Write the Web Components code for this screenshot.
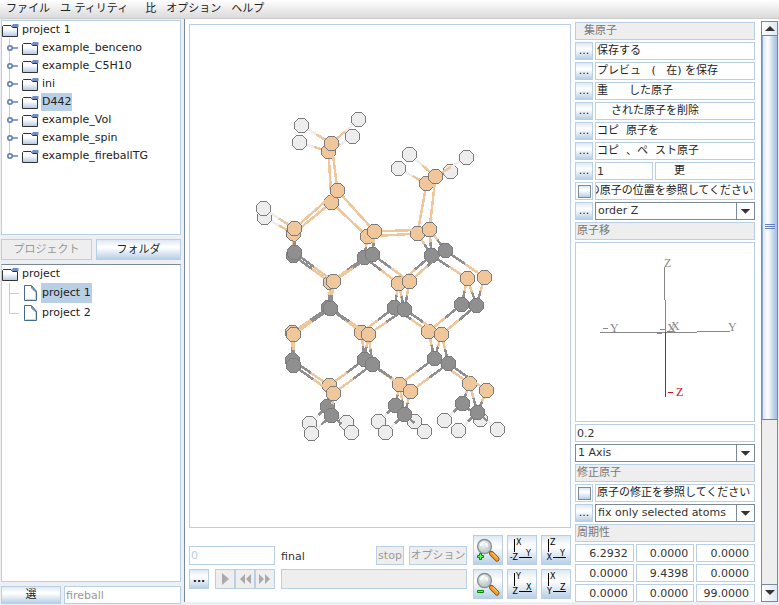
<!DOCTYPE html>
<html lang="ja">
<head>
<meta charset="utf-8">
<title>project 1</title>
<style>
  html, body { height: 100%; margin: 0; }
  body {
    background: #eeeff2; color: #333;
    font: 11px/16px "DejaVu Sans", "Noto Sans CJK JP", sans-serif;
    --line: #b8cfe5; --dark: #7a8a99; --dim: #999; --panel: #eee;
    --metal: linear-gradient(#dde8f3, #fff 35%, #fff 40%, #b8cfe5);
  }
</style>
</head>
<body>
<molecule-app></molecule-app>
<script>
const define = (name, html, setup) => {
  const t = document.createElement('template');
  t.innerHTML = '<style>*{box-sizing:border-box}button,input,select{font:inherit;color:inherit;margin:0;border-radius:0}</style>' + html;
  customElements.define(name, class extends HTMLElement {
    connectedCallback() {
      if (this.shadowRoot) return;
      this.attachShadow({ mode: 'open' }).append(t.content.cloneNode(true));
      if (setup) setup(this, this.shadowRoot);
    }
  });
};

define('metal-button', `
<style>
  :host { display: block; min-width: 0; }
  button { display: flex; align-items: center; justify-content: center; width: 100%; height: 100%; padding: 0;
    border: 1px solid var(--line); background: var(--metal); color: #222; white-space: nowrap; overflow: hidden; }
  button:disabled { background: var(--panel); color: var(--dim); }
  :host([strong]) button { font-weight: bold; }
</style>
<button type="button"><slot></slot></button>`, (el, root) => {
  const b = root.querySelector('button');
  b.disabled = el.hasAttribute('off');
  if (el.hasAttribute('name')) b.setAttribute('aria-label', el.getAttribute('name'));
});

define('text-box', `
<style>
  :host { display: block; min-width: 0; }
  input { display: block; width: 100%; height: 100%; padding: 0 1px; border: 1px solid var(--line); background: #fff; outline: 0; }
  input:disabled { color: var(--line); }
  :host([number]) input { text-align: right; padding-right: 5px; }
  :host([dim]) input { color: var(--dim); }
</style>
<input type="text">`, (el, root) => {
  const i = root.querySelector('input');
  i.value = el.getAttribute('value') || '';
  i.disabled = el.hasAttribute('off');
  i.setAttribute('aria-label', el.getAttribute('name'));
});

define('combo-box', `
<style>
  :host { display: grid; grid-template-columns: 1fr 18px; min-width: 0; border: 1px solid var(--dark); background: #fff; }
  select { grid-area: 1 / 1 / 2 / 3; appearance: none; width: 100%; height: 16px; padding: 0 18px 0 2px; border: 0; background: none; outline: 0; }
  svg { grid-area: 1 / 2; width: 18px; height: 16px; border-left: 1px solid var(--dark); pointer-events: none; }
</style>
<select></select>
<svg viewBox="0 0 18 16" aria-hidden="true"><path d="M4 6h10l-5 5z" fill="#333"/></svg>`, (el, root) => {
  const s = root.querySelector('select');
  s.add(new Option(el.getAttribute('value')));
  s.setAttribute('aria-label', el.getAttribute('name'));
});

define('action-row', `
<style>
  :host { display: grid; grid-template-columns: 18px 1fr; gap: 2px; height: 18px; }
  .text { border: 1px solid var(--line); background: #fff; white-space: pre; overflow: hidden; padding: 0 1px; color: #222; }
</style>
<metal-button>...</metal-button><div class="text"><slot></slot></div>`, (el, root) => {
  root.querySelector('metal-button').setAttribute('name', el.textContent.trim());
});

define('check-row', `
<style>
  :host { display: block; height: 18px; }
  label { display: grid; grid-template-columns: 18px 1fr; gap: 2px; height: 100%; }
  .box { display: flex; align-items: center; justify-content: center; border: 1px solid var(--line); background: #fff; }
  input { appearance: none; width: 13px; height: 13px; border: 1px solid var(--dark); background: var(--metal); }
  .text { display: flex; border: 1px solid var(--line); background: #fff; white-space: pre; overflow: hidden; padding: 0 1px; color: #222; }
  :host([end]) .text { justify-content: flex-end; }
</style>
<label><span class="box"><input type="checkbox"></span><span class="text"><slot></slot></span></label>`);

define('section-title', `
<style>
  :host { display: block; height: 18px; padding: 0 1px; border: 1px solid var(--line); background: var(--panel); color: #777; }
  div { white-space: pre; }
</style>
<div><slot></slot></div>`);

define('menu-bar', `
<style>
  nav { display: flex; gap: 10px; height: 19px; padding: 0 6px; border-bottom: 1px solid #ccc; background: linear-gradient(#fff, #dadada); }
  button { padding: 0; border: 0; background: none; color: #222; white-space: pre; line-height: 18px; }
</style>
<nav><button>ファイル</button><button>ユ ティリティ</button><button>  比</button><button>オプション</button><button>ヘルプ</button></nav>`);

define('tree-node', `
<style>
  :host { display: flex; align-items: center; height: var(--row, 18px); }
  :host([kind=root]) { height: 18px; }
  .handle { flex: none; width: 20px; height: 100%; }
  .icon { flex: none; width: 17px; height: 16px; }
  .label { height: 100%; display: flex; align-items: center; margin-left: 2px; padding: 0 1px; color: #222; }
  :host([selected]) .label { background: var(--line); }
</style>
<svg class="handle" viewBox="0 0 20 18" preserveAspectRatio="none" aria-hidden="true"></svg>
<svg class="icon" viewBox="0 0 17 16" aria-hidden="true"></svg>
<span class="label"><slot></slot></span>`, (el, root) => {
  const h = root.querySelector('.handle'), i = root.querySelector('.icon'), k = el.getAttribute('kind');
  el.setAttribute('role', 'treeitem');
  if (k === 'root') h.remove();
  if (k === 'branch') h.innerHTML = '<path d="M7.500 0V' + (el.hasAttribute('last') ? 9 : 18) + '" stroke="#b8cfe5"/><path d="M10 9H16" stroke="#6382bf" stroke-width="1.500"/><circle cx="8" cy="9" r="2.200" fill="#fff" stroke="#6382bf" stroke-width="1.700"/>';
  if (k === 'leaf') h.innerHTML = '<path d="M7.500 0V' + (el.hasAttribute('last') ? 9.5 : 18) + 'M7.500 9.500H17" stroke="#b8cfe5" fill="none"/>';
  i.innerHTML = k === 'leaf'
    ? '<path d="M2.500 .5H9.500L14.500 6.500V15.500H2.500Z" fill="#fff" stroke="#46698f"/><path d="M4 14.500H13.500V7" fill="none" stroke="#c8d8ea"/><path d="M9.500 1V3L13 6.500H14.500Z" fill="#8aa9d0" stroke="#46698f" stroke-width=".7"/>'
    : '<defs><linearGradient id="g" x2="0" y2="1"><stop offset=".35" stop-color="#fff"/><stop offset="1" stop-color="#b0c6e4"/></linearGradient></defs><path d="M.5 14.500V4.500L1.500 3.500H9L10.500 5.500H15.500V14.500Z" fill="url(#g)" stroke="#333"/><path d="M9.500 4L11 2H16.500V5H10.500Z" fill="#6f8cc4"/>';
});

define('tree-panel', `
<style>
  :host { display: block; min-height: 0; overflow: hidden; border: 1px solid var(--line); background: #fff; }
  :host([tall]) { --row: 20px; border-top-color: var(--dark); }
</style><div role="tree"><slot></slot></div>`);

define('project-side', `
<style>
  :host { display: grid; grid-template-rows: 215fr 21px 318fr 16px; gap: 4px; min-height: 0; padding: 1px 3px 0 1px; border-right: 1px solid var(--dark); }
  .tabs { display: grid; grid-template-columns: 91fr 85fr; gap: 4px; }
  .filter { display: grid; grid-template-columns: 60px 1fr; gap: 3px; }
</style>
<tree-panel aria-label="フォルダ">
  <tree-node kind="root">project 1</tree-node>
  <tree-node kind="branch">example_benceno</tree-node>
  <tree-node kind="branch">example_C5H10</tree-node>
  <tree-node kind="branch">ini</tree-node>
  <tree-node kind="branch" selected>D442</tree-node>
  <tree-node kind="branch">example_Vol</tree-node>
  <tree-node kind="branch">example_spin</tree-node>
  <tree-node kind="branch" last>example_fireballTG</tree-node>
</tree-panel>
<div class="tabs"><metal-button off>プロジェクト</metal-button><metal-button>フォルダ</metal-button></div>
<tree-panel tall aria-label="プロジェクト">
  <tree-node kind="root">project</tree-node>
  <tree-node kind="leaf" selected>project 1</tree-node>
  <tree-node kind="leaf" last>project 2</tree-node>
</tree-panel>
<div class="filter"><metal-button>選</metal-button><text-box dim value="fireball" name="filter"></text-box></div>`);

/* Atoms: [kind, x, y], in two depth layers. Bonds join the same indexes in each layer; CROSS joins one layer to the other. */
const FAR = [
  ['h',299,142],['h',352,136],['c',328,151],['c',331,202],['h',264,217],['c',293,233],['c',367,236],['c',417,233],
  ['c',426,183],['h',398,168],['h',450,171],['s',293,255],['s',364,257],['s',431,255],['c',330,282],['c',398,283],
  ['c',467,278],['s',328,307],['s',394,307],['s',461,304],['c',292,332],['c',361,332],['c',428,331],['s',292,360],
  ['s',364,359],['s',434,358],['c',329,385],['c',399,384],['c',469,383],['s',327,406],['s',395,405],['s',462,403],
  ['h',309,423],['h',346,422],['h',378,421],['h',414,421],['h',444,420],['h',480,419]];
const NEAR = [
  ['h',301,125],['h',358,119],['c',331,143],['c',337,190],['h',263,208],['c',294,228],['c',374,231],['c',429,229],
  ['c',435,176],['h',409,154],['h',466,157],['s',294,252],['s',372,254],['s',445,250],['c',333,281],['c',409,281],
  ['c',484,277],['s',330,308],['s',404,309],['s',476,305],['c',293,334],['c',368,334],['c',441,334],['s',293,365],
  ['s',372,364],['s',448,363],['c',333,393],['c',410,391],['c',486,390],['s',331,415],['s',404,414],['s',477,412],
  ['h',311,433],['h',351,432],['h',385,432],['h',424,431],['h',458,430],['h',497,429]];
const BONDS = [[2,0],[2,1],[2,3],[3,5],[5,4],[3,6],[6,7],[7,8],[8,9],[8,10],[5,11],[6,12],[7,13],[11,14],[12,14],
  [12,15],[13,15],[13,16],[14,17],[15,18],[16,19],[17,20],[17,21],[18,21],[18,22],[19,22],[20,23],[21,24],[22,25],
  [23,26],[24,26],[24,27],[25,27],[25,28],[26,29],[27,30],[28,31],[29,32],[29,33],[30,34],[30,35],[31,36],[31,37]];
const CROSS = [[7,13],[15,18],[16,19],[21,24],[22,25],[27,30],[28,31]];

define('molecule-view', `
<style>
  :host { display: block; min-height: 0; border: 1px solid var(--line); background: #fff; }
  svg { display: block; width: 100%; height: 100%; }
</style>
<svg viewBox="190 25 380 502" shape-rendering="crispEdges" role="img" aria-label="D442"></svg>`, (el, root) => {
  const fill = { h: '#ededed', c: '#f0c69b', s: '#8f8f8f' };
  const bond = (a, b) => {
    const mx = (a[1] + b[1] + 1) / 2, my = (a[2] + b[2] + 1) / 2;
    const part = p => `<line x1="${p[1] + .5}" y1="${p[2] + .5}" x2="${mx}" y2="${my}" stroke="${fill[p[0]]}" stroke-width="2.500"/>`;
    return part(a) + part(b);
  };
  const atom = a => `<circle cx="${a[1] + .5}" cy="${a[2] + .5}" r="7.400" fill="${fill[a[0]]}" stroke="#7b7b7b"/>`;
  const cross = CROSS.map(([a, b]) => a === 7 || a === 21 || a === 22 ? bond(NEAR[a], FAR[b]) : bond(FAR[a], NEAR[b])).join('');
  root.querySelector('svg').innerHTML =
    BONDS.map(([a, b]) => bond(FAR[a], FAR[b])).join('') + cross + FAR.map(atom).join('') +
    BONDS.map(([a, b]) => bond(NEAR[a], NEAR[b])).join('') + NEAR.map(atom).join('');
});

define('zoom-icon', `
<style>:host, svg { display: block; width: 28px; height: 28px; }</style>
<svg viewBox="1 1 28 28" aria-hidden="true">
  <defs><radialGradient id="l" cx=".4" cy=".35"><stop stop-color="#f4f7f7"/><stop offset="1" stop-color="#c0cccd"/></radialGradient></defs>
  <path d="M16 16L19 19" stroke="#777" stroke-width="3"/>
  <path d="M18.500 18.500L24 24" stroke="#7a4b12" stroke-width="5" stroke-linecap="round"/>
  <path d="M18.500 18.500L24 24" stroke="#f0a030" stroke-width="3.400" stroke-linecap="round"/>
  <path d="M19.500 18L24 22.500" stroke="#ffe0a0"/>
  <circle cx="11.500" cy="11.500" r="7" fill="url(#l)" stroke="#8b9293" stroke-width="1.400"/>
  <path d="M7.500 11C8 8 10 7 12 7M12 9h2v3" fill="none" stroke="#fff" stroke-width="1.300"/>
  <path class="sign" fill="#5f5" stroke="#080"/>
</svg>`, (el, root) => root.querySelector('.sign').setAttribute('d',
  el.hasAttribute('out') ? 'M4.500 21.500h6v2h-6z' : 'M6.500 18.500h2v2h2v2h-2v2h-2v-2h-2v-2h2z'));

define('axis-icon', `
<style>:host, svg { display: block; width: 28px; height: 28px; } text { font: 8px "DejaVu Sans", sans-serif; fill: #000; }</style>
<svg viewBox="1 1 28 28"><path d="M7.500 4V17M12 22.500H25" stroke="#000" shape-rendering="crispEdges"/>
<text x="9" y="10"></text><text x="11" y="25" text-anchor="end"></text><text x="19" y="21"></text></svg>`,
(el, root) => root.querySelectorAll('text').forEach((t, i) => t.textContent = el.getAttribute('axes').split(',')[i]));

define('player-panel', `
<style>
  :host { display: grid; grid-template-columns: 86px 1fr 98px; gap: 4px 6px; grid-template-rows: 30px 30px; }
  .a, .b { display: flex; align-items: flex-end; }
  .a text-box { flex: 1; height: 19px; }
  .b span { flex: 1; }
  .stop { width: 28px; height: 19px; margin-right: 5px; }
  .opt { width: 58px; height: 19px; }
  .c { display: flex; gap: 6px; height: 20px; }
  .more { width: 20px; }
  .keys { flex: 1; display: flex; }
  .keys metal-button { flex: 1; }
  .d { height: 20px; border: 1px solid var(--line); background: var(--panel); }
  .icons { grid-area: 1 / 3 / 3 / 4; display: grid; grid-template-columns: repeat(3, 30px); grid-template-rows: 30px 30px; gap: 4px; }
  svg { width: 16px; height: 12px; fill: #aaa; }
</style>
<div class="a"><text-box off value="0" name="step"></text-box></div>
<div class="b"><span>final</span><metal-button class="stop" off>stop</metal-button><metal-button class="opt" off>オプション</metal-button></div>
<div class="icons">
  <metal-button name="zoom in"><zoom-icon></zoom-icon></metal-button>
  <metal-button name="view 1"><axis-icon axes="X,-Z,Y"></axis-icon></metal-button>
  <metal-button name="view 2"><axis-icon axes="Z,X,Y"></axis-icon></metal-button>
  <metal-button name="zoom out"><zoom-icon out></zoom-icon></metal-button>
  <metal-button name="view 3"><axis-icon axes="Y,Z,X"></axis-icon></metal-button>
  <metal-button name="view 4"><axis-icon axes="X,Y,Z"></axis-icon></metal-button>
</div>
<div class="c"><metal-button class="more" strong>...</metal-button>
  <div class="keys">
    <metal-button off name="play"><svg viewBox="0 0 16 12"><path d="M5 0V12L12 6z"/></svg></metal-button>
    <metal-button off name="back"><svg viewBox="0 0 16 12"><path d="M8 1V11L3 6zM14 1V11L9 6z"/></svg></metal-button>
    <metal-button off name="forward"><svg viewBox="0 0 16 12"><path d="M2 1V11L7 6zM8 1V11L13 6z"/></svg></metal-button>
  </div></div>
<div class="d" role="progressbar" aria-label="progress"></div>`);

define('axis-view', `
<style>
  :host { display: block; height: 180px; border: 1px solid var(--line); background: #fff; }
  svg { display: block; width: 100%; height: 100%; }
  text { font: 12px "Liberation Serif", serif; fill: #888; }
  .hot { fill: #c11; }
</style>
<svg viewBox="576 243 178 178">
  <g fill="none" stroke="#888" shape-rendering="crispEdges">
    <path d="M664.500 267V300M665.500 300V332M600 332.500H697M697 331.500H730M657 333.500H662M660 329.500H665M667 331.500H673M603 328.500H608"/>
  </g>
  <g fill="#c11" shape-rendering="crispEdges"><rect x="665" y="332" width="1" height="65"/><rect x="668" y="392" width="5" height="1"/></g>
  <text x="664" y="267">Z</text><text x="610" y="332">Y</text><text x="728" y="331">Y</text>
  <text x="667" y="332">X</text><text x="671" y="330">X</text>
  <text class="hot" x="676" y="396">Z</text>
</svg>`);

define('edit-panel', `
<style>
  :host { display: flex; flex-direction: column; gap: 2px; min-height: 0; overflow: hidden; }
  .pair, .combo, .matrix { display: grid; gap: 2px; height: 18px; flex: none; }
  .pair { grid-template-columns: 18px 58px 1fr; }
  .combo { grid-template-columns: 18px 1fr; }
  .matrix { grid-template-columns: repeat(3, 1fr); grid-auto-rows: 18px; height: auto; }
  .word { border: 1px solid var(--line); padding-left: 18px; color: #222; }
  .value, .wide { height: 18px; }
  section-title, action-row, check-row, axis-view, .value, .wide { flex: none; }
</style>
<section-title>  集原子</section-title>
<action-row>保存する</action-row>
<action-row>プレビュ   (   在) を保存</action-row>
<action-row>重      した原子</action-row>
<action-row>    された原子を削除</action-row>
<action-row>コピ  原子を</action-row>
<action-row>コピ  、ペ  スト原子</action-row>
<div class="pair"><metal-button name="更">...</metal-button><text-box value="1" name="更"></text-box><div class="word">更</div></div>
<check-row end>の原子の位置を参照してください</check-row>
<div class="combo"><metal-button name="order">...</metal-button><combo-box value="order Z" name="order"></combo-box></div>
<section-title>原子移</section-title>
<axis-view></axis-view>
<text-box class="value" value="0.2" name="原子移"></text-box>
<combo-box class="wide" value="1 Axis" name="axis"></combo-box>
<section-title>修正原子</section-title>
<check-row>原子の修正を参照してください</check-row>
<div class="combo"><metal-button name="fix">...</metal-button><combo-box value="fix only selected atoms" name="fix"></combo-box></div>
<section-title>周期性</section-title>
<div class="matrix"></div>`, (el, root) => {
  root.querySelector('.matrix').innerHTML = ['6.2932','0.0000','0.0000','0.0000','9.4398','0.0000','0.0000','0.0000','99.0000']
    .map((v, i) => `<text-box number value="${v}" name="周期性 ${i + 1}"></text-box>`).join('');
});

define('scroll-strip', `
<style>
  :host { display: grid; grid-template-rows: 14px 1fr 17px; min-height: 0; border: 1px solid var(--dark); background: #eee; }
  button { padding: 0; border: 0; background: linear-gradient(90deg, #fff, #dde8f3); display: flex; align-items: center; justify-content: center; }
  .up { border-bottom: 1px solid #6382bf; } .down { border-top: 1px solid var(--dark); }
  .track { min-height: 0; }
  .thumb { height: 70%; display: flex; align-items: center; justify-content: center; border-bottom: 1px solid #6382bf; border-left: 1px solid #8fabd8;
    background: linear-gradient(90deg, #dbe7f5, #fff 35%, #b8cfe5 80%, #a3bfe6); }
  svg { display: block; }
</style>
<button class="up" aria-label="up"><svg width="10" height="6"><path d="M0 5L5 0L10 5z" fill="#333"/></svg></button>
<div class="track" role="scrollbar" aria-label="scroll" aria-valuenow="0"><div class="thumb"><svg width="10" height="6"><path d="M0 .5H10M0 2.500H10M0 4.500H10" stroke="#6382bf"/></svg></div></div>
<button class="down" aria-label="down"><svg width="10" height="6"><path d="M0 0L5 5L10 0z" fill="#333"/></svg></button>`);

define('molecule-app', `
<style>
  :host { display: grid; grid-template-rows: 19px 1fr; height: 100vh; overflow: hidden; }
  main { display: grid; grid-template-columns: 185px 1fr 203px; min-height: 0; padding: 0 1px 3px 0; }
  .stage { display: grid; grid-template-rows: 1fr 64px; gap: 7px; min-height: 0; padding: 5px 4px 3px; background: #fff; }
  .right { display: grid; grid-template-columns: 1fr 17px; gap: 6px; min-height: 0; background: #fff; }
  edit-panel { padding-top: 3px; }
  scroll-strip { margin-top: 2px; }
</style>
<menu-bar></menu-bar>
<main>
  <project-side></project-side>
  <div class="stage"><molecule-view></molecule-view><player-panel></player-panel></div>
  <div class="right"><edit-panel></edit-panel><scroll-strip></scroll-strip></div>
</main>`);
</script>
</body>
</html>
